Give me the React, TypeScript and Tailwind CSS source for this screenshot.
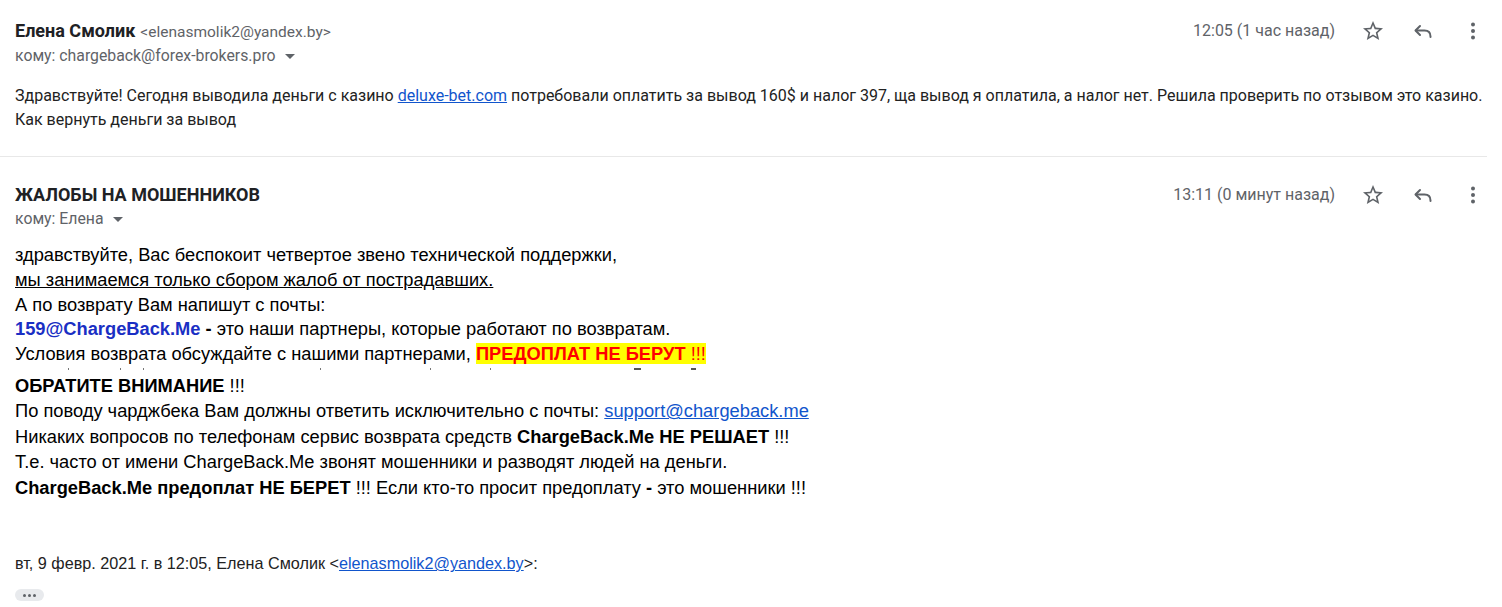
import React from "react";

const Star = () => (
  <svg width="24" height="24" viewBox="0 0 24 24" fill="#5f6368">
    <path d="M22 9.24l-7.19-.62L12 2 9.19 8.63 2 9.24l5.46 4.73L5.82 21 12 17.27 18.18 21l-1.63-7.03L22 9.24zM12 15.4l-3.76 2.27 1-4.28-3.32-2.88 4.38-.38L12 6.1l1.71 4.04 4.38.38-3.32 2.88 1 4.28L12 15.4z" />
  </svg>
);

const Reply = () => (
  <svg width="24" height="24" viewBox="0 0 24 24" fill="none" stroke="#5f6368" strokeWidth="2" strokeLinecap="round" strokeLinejoin="round">
    <path d="M9 7L4.5 11.5L9 16" />
    <path d="M5 11.5H13.5C17 11.5 19.5 13.5 19.5 17.5V18" />
  </svg>
);

const More = () => (
  <svg width="24" height="24" viewBox="0 0 24 24" fill="#5f6368">
    <circle cx="12" cy="5.5" r="2" />
    <circle cx="12" cy="12" r="2" />
    <circle cx="12" cy="18.5" r="2" />
  </svg>
);

const Caret = () => (
  <svg width="10" height="6" viewBox="0 0 10 6" fill="#5f6368" className="ml-[9px] mt-[2px]">
    <path d="M0 0h10L5 5z" />
  </svg>
);

const Actions = ({ time }: { time: string }) => (
  <div className="flex items-center">
    <span className="text-[16px] text-[#5f6368] mr-[25px]">{time}</span>
    <div className="w-[26px] flex justify-center mr-[24px]"><Star /></div>
    <div className="w-[26px] flex justify-center mr-[24px]"><Reply /></div>
    <div className="w-[26px] flex justify-center"><More /></div>
  </div>
);

export default function App() {
  const roboto = { fontFamily: "Roboto, 'Liberation Sans', Arial, sans-serif" };
  const arial = { fontFamily: "'Liberation Sans', Arial, sans-serif" };
  return (
    <div className="w-[1502px] h-[607px] bg-white overflow-hidden text-[#222222]" style={roboto}>
      {/* Message 1 */}
      <div className="pl-[15px] pr-[16px] pt-[19px]">
        <div className="flex items-start justify-between">
          <div>
            <div className="flex items-baseline leading-[24px]">
              <span className="text-[18px] font-bold text-[#202124]">Елена Смолик</span>
              <span className="text-[15.5px] text-[#5f6368] ml-[5px]">&lt;elenasmolik2@yandex.by&gt;</span>
            </div>
            <div className="flex items-center text-[15.8px] text-[#5f6368] leading-[22px] mt-[1px]">
              кому: chargeback@forex-brokers.pro <Caret />
            </div>
          </div>
          <div className="mt-[0px]"><Actions time="12:05 (1 час назад)" /></div>
        </div>
        <div className="mt-[17px] text-[16px] leading-[24px] text-[#222222]">
          <div>
            Здравствуйте! Сегодня выводила деньги с казино{" "}
            <span className="text-[#1155cc] underline">deluxe-bet.com</span> потребовали оплатить за вывод 160$ и налог 397, ща вывод я оплатила, а налог нет. Решила проверить по отзывом это казино.
          </div>
          <div>Как вернуть деньги за вывод</div>
        </div>
      </div>

      <div className="mt-[24px] h-px bg-[#e8e8e8] w-[1487px]" />

      {/* Message 2 */}
      <div className="pl-[15px] pr-[16px] pt-[26px]">
        <div className="flex items-start justify-between">
          <div>
            <div className="text-[18px] font-bold text-[#202124] leading-[24px]">ЖАЛОБЫ НА МОШЕННИКОВ</div>
            <div className="flex items-center text-[15.8px] text-[#5f6368] leading-[22px] mt-[1px]">
              кому: Елена <Caret />
            </div>
          </div>
          <div className="mt-[0px]"><Actions time="13:11 (0 минут назад)" /></div>
        </div>

        <div className="mt-[13px] text-[18.3px] leading-[24.8px] text-black" style={arial}>
          <div>здравствуйте, Вас беспокоит четвертое звено технической поддержки,</div>
          <div><span className="underline">мы занимаемся только сбором жалоб от пострадавших.</span></div>
          <div>А по возврату Вам напишут с почты:</div>
          <div>
            <span className="font-bold text-[#1a2fc4]">159@ChargeBack.Me</span> <b>-</b> это наши партнеры, которые работают по возвратам.
          </div>
          <div>
            Условия возврата обсуждайте с нашими партнерами,{" "}
            <span className="bg-[#ffff00] text-[#ff0000] font-bold">ПРЕДОПЛАТ НЕ БЕРУТ</span>
            <span className="bg-[#ffff00] text-[#ff0000]"> !!!</span>
          </div>
          <div className="relative h-[6px]">
            {[68, 120, 143, 320, 430, 490].map((x) => (
              <span key={x} className="absolute top-[1px] w-[1px] h-[2px] bg-[#777]" style={{ left: x - 15 }} />
            ))}
            <span className="absolute top-[1px] left-[619px] w-[7px] h-[2px] bg-[#555]" />
            <span className="absolute top-[1px] left-[676px] w-[5px] h-[2px] bg-[#555]" />
          </div>
          <div className="leading-[25.5px]">
            <div><b>ОБРАТИТЕ ВНИМАНИЕ</b> !!!</div>
            <div>
              По поводу чарджбека Вам должны ответить исключительно с почты:{" "}
              <span className="text-[#1155cc] underline">support@chargeback.me</span>
            </div>
            <div>
              Никаких вопросов по телефонам сервис возврата средств <b>ChargeBack.Me НЕ РЕШАЕТ</b> !!!
            </div>
            <div>Т.е. часто от имени ChargeBack.Me звонят мошенники и разводят людей на деньги.</div>
            <div>
              <b>ChargeBack.Me предоплат НЕ БЕРЕТ</b> !!! Если кто-то просит предоплату <b>-</b> это мошенники !!!
            </div>
          </div>
        </div>

        <div className="mt-[52px] text-[16.2px] leading-[22px] text-[#222222]" style={arial}>
          вт, 9 февр. 2021 г. в 12:05, Елена Смолик &lt;<span className="text-[#1155cc] underline">elenasmolik2@yandex.by</span>&gt;:
        </div>
        <div className="mt-[15px] w-[29px] h-[12px] rounded-[6px] bg-[#e8eaed] flex items-center justify-center gap-[2px]">
          <span className="w-[3px] h-[3px] rounded-full bg-[#5f6368]" />
          <span className="w-[3px] h-[3px] rounded-full bg-[#5f6368]" />
          <span className="w-[3px] h-[3px] rounded-full bg-[#5f6368]" />
        </div>
      </div>
    </div>
  );
}
